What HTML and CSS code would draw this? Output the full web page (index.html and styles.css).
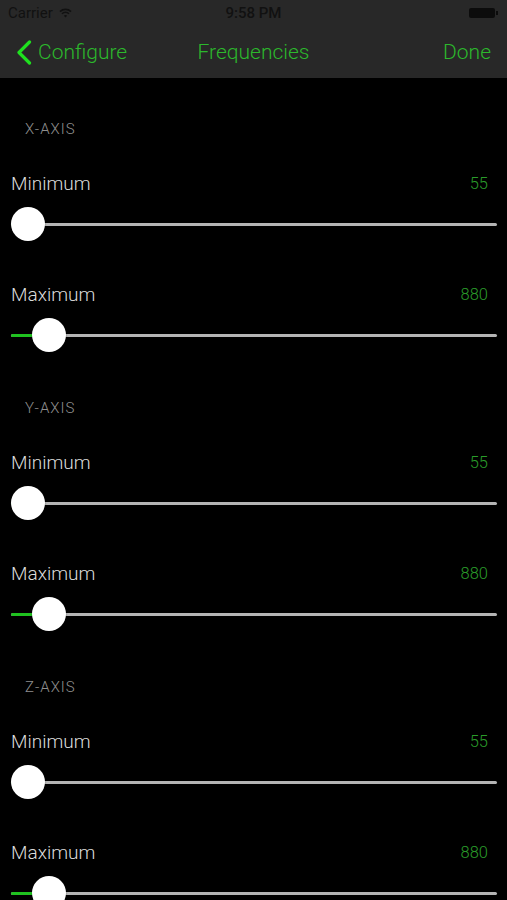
FILE: index.html
```html
<!DOCTYPE html>
<html lang="en">
<head>
  <meta charset="UTF-8">
  <title>Frequencies</title>
  <link rel="stylesheet" href="styles.css">
</head>
<body>

  <header class="top">
    <div class="status">
      <div class="status-left">
        <span>Carrier</span>
        <svg class="wifi" width="13" height="10" viewBox="0 0 13 10">
          <path d="M1 3.6 A8 8 0 0 1 12 3.6" fill="none" stroke="#111" stroke-width="1.6"/>
          <path d="M3 5.8 A5 5 0 0 1 10 5.8" fill="none" stroke="#111" stroke-width="1.6"/>
          <path d="M6.5 9.5 L4.8 7.7 A2.5 2.5 0 0 1 8.2 7.7 Z" fill="#111"/>
        </svg>
      </div>
      <span class="time">9:58 PM</span>
      <div class="battery"><span class="battery-body"></span><span class="battery-nub"></span></div>
    </div>
    <nav class="navbar">
      <a class="back">
        <svg width="16" height="25" viewBox="0 0 16 25">
          <path d="M13.5 2 L3 12.5 L13.5 23" fill="none" stroke="#1fe01f" stroke-width="3.2" stroke-linecap="round" stroke-linejoin="round"/>
        </svg>
        Configure
      </a>
      <span class="title">Frequencies</span>
      <a class="done">Done</a>
    </nav>
  </header>

  <main class="content" id="content"></main>

  <script>
    const axes = ['X-AXIS', 'Y-AXIS', 'Z-AXIS'];
    const rows = [
      { label: 'Minimum', value: 55, offset: 0 },
      { label: 'Maximum', value: 880, offset: 21 }
    ];

    document.getElementById('content').innerHTML = axes.map(axis => `
      <section class="axis">
        <h2 class="axis-title">${axis}</h2>
        ${rows.map(row => `
          <div class="row">
            <div class="row-head">
              <span class="row-label">${row.label}</span>
              <span class="row-value">${row.value}</span>
            </div>
            <div class="slider">
              <div class="track"></div>
              <div class="fill" style="width: ${row.offset + 4}px"></div>
              <div class="thumb" style="left: ${row.offset}px"></div>
            </div>
          </div>`).join('')}
      </section>`).join('');
  </script>

</body>
</html>
```

FILE: styles.css
```css
* {
  box-sizing: border-box;
}

body {
  margin: 0;
  background: #000;
  font-family: Roboto, "Liberation Sans", sans-serif;
  font-weight: 300;
  height: 900px;
  overflow: hidden;
}

.top {
  background: #282828;
}

.status {
  height: 26px;
  display: flex;
  align-items: center;
  justify-content: space-between;
  padding: 0 9px 0 8px;
  color: #111;
  font-size: 15px;
  font-weight: 400;
  position: relative;
}

.status-left {
  display: flex;
  align-items: center;
  gap: 6px;
}

.time {
  position: absolute;
  left: 0;
  right: 0;
  text-align: center;
  font-weight: 500;
}

.battery {
  display: flex;
  align-items: center;
  gap: 1px;
}

.battery-body {
  width: 26px;
  height: 10px;
  background: #0c0c0c;
  border-radius: 2px;
}

.battery-nub {
  width: 2px;
  height: 4px;
  background: #0c0c0c;
}

.navbar {
  height: 52px;
  display: flex;
  align-items: center;
  justify-content: space-between;
  padding: 0 16px 0 16px;
  color: #2cb82c;
  font-size: 21px;
  position: relative;
}

.back {
  display: flex;
  align-items: center;
  gap: 6px;
}

.title {
  position: absolute;
  left: 0;
  right: 0;
  text-align: center;
}

.content {
  padding-top: 26px;
}

.axis-title {
  margin: 0;
  height: 57px;
  padding: 16px 0 0 25px;
  font-size: 15px;
  line-height: 18px;
  font-weight: 300;
  color: #8f8f8f;
  letter-spacing: 1px;
}

.row {
  height: 111px;
  padding: 0 10px 0 11px;
}

.row-head {
  display: flex;
  justify-content: space-between;
  align-items: center;
  height: 44px;
}

.row-label {
  font-size: 19px;
  color: #dcdcdc;
}

.row-value {
  font-size: 16.5px;
  color: #2a9c2a;
  margin-right: 9px;
}

.slider {
  position: relative;
  height: 40px;
}

.track {
  position: absolute;
  left: 0;
  right: 0;
  top: 18px;
  height: 3px;
  background: #b4b4b4;
  border-radius: 2px;
}

.fill {
  position: absolute;
  left: 0;
  top: 18px;
  height: 3px;
  background: #1fc21f;
  border-radius: 2px;
}

.thumb {
  position: absolute;
  top: 2px;
  width: 34px;
  height: 34px;
  border-radius: 50%;
  background: #fff;
  box-shadow: 0 1px 2px rgba(0,0,0,0.4);
}
```
